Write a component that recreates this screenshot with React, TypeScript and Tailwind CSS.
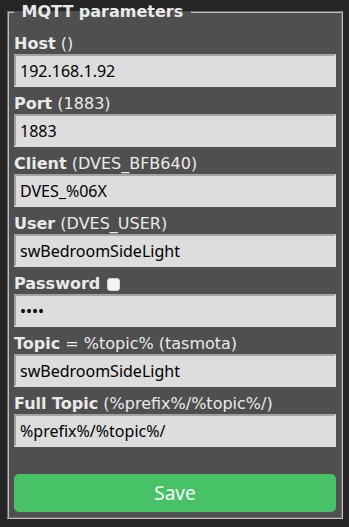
const FIELDS = [
  { label: 'Host', note: ' ()', value: '192.168.1.92' },
  { label: 'Port', note: ' (1883)', value: '1883' },
  { label: 'Client', note: ' (DVES_BFB640)', value: 'DVES_%06X' },
  { label: 'User', note: ' (DVES_USER)', value: 'swBedroomSideLight' },
  { label: 'Password', note: '', value: '****', password: true },
  { label: 'Topic', note: ' = %topic% (tasmota)', value: 'swBedroomSideLight' },
  { label: 'Full Topic', note: ' (%prefix%/%topic%/)', value: '%prefix%/%topic%/' },
]

export default function App() {
  return (
    <div className="h-[527px] bg-[#252525] pt-[2px] pl-[7px] font-['DejaVu_Sans',Verdana,sans-serif] text-[#eaeaea]">
      <fieldset className="w-[336px] border-2 [border-style:groove] border-[#c0c0c0] bg-[#4f4f4f] px-[5px] pb-[5px]">
        <legend className="px-[2px] text-[16px] leading-[20px] font-bold">{'\u00a0MQTT parameters\u00a0'}</legend>

        <div className="mt-[12px] flex flex-col gap-[7px]">
          {FIELDS.map((f) => (
            <div key={f.label} className="flex flex-col">
              <div className="h-[20px] flex items-center text-[16px] leading-[20px] whitespace-pre">
                <b>{f.label}</b>
                {f.note}
                {f.password && (
                  <span className="ml-[7px] w-[13px] h-[13px] rounded-[3px] bg-[#f4f4f4] border border-[#d6d6d6]" />
                )}
              </div>
              <input
                readOnly
                type={f.password ? 'password' : 'text'}
                defaultValue={f.value}
                className="h-[33px] w-full px-[4px] bg-[#dddddd] text-black text-[16px] font-['Noto_Sans',sans-serif] border-2 border-solid border-t-[#a3a3a3] border-l-[#a3a3a3] border-r-[#dddddd] border-b-[#dddddd] outline-none"
              />
            </div>
          ))}
        </div>

        <button className="mt-[27px] w-full h-[38px] rounded-[5px] bg-[#47c266] text-[#faffff] text-[19px] leading-[38px] font-['Noto_Sans',sans-serif]">
          Save
        </button>
      </fieldset>
    </div>
  )
}
